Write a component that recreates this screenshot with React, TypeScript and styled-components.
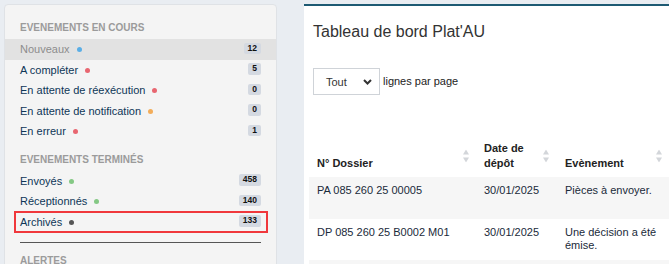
import styled, { createGlobalStyle } from "styled-components";

type Item = {
  label: string;
  count: number;
  dot: string;
  active?: boolean;
  flagged?: boolean;
};

const enCours: Item[] = [
  { label: "Nouveaux", count: 12, dot: "#5aaee6", active: true },
  { label: "A compléter", count: 5, dot: "#e86670" },
  { label: "En attente de réexécution", count: 0, dot: "#e86670" },
  { label: "En attente de notification", count: 0, dot: "#f3ad5a" },
  { label: "En erreur", count: 1, dot: "#e86670" },
];

const termines: Item[] = [
  { label: "Envoyés", count: 458, dot: "#84c884" },
  { label: "Réceptionnés", count: 140, dot: "#84c884" },
  { label: "Archivés", count: 133, dot: "#555555", flagged: true },
];

const rows = [
  { dossier: "PA 085 260 25 00005", date: "30/01/2025", event: "Pièces à envoyer." },
  { dossier: "DP 085 260 25 B0002 M01", date: "30/01/2025", event: "Une décision a été émise." },
  { dossier: "PC 085 260 24 00031", date: "29/01/2025", event: "Pièces à envoyer." },
];

const GlobalStyle = createGlobalStyle`
  html, body {
    margin: 0;
    padding: 0;
    background: #e9edf2;
    font-family: "Liberation Sans", Arial, sans-serif;
    overflow: hidden;
  }
`;

const Page = styled.div`
  display: flex;
  align-items: flex-start;
  gap: 27px;
  padding: 4px 0 0 4px;
  height: 260px;
  overflow: hidden;
`;

const Sidebar = styled.nav`
  width: 271px;
  flex-shrink: 0;
  background: #f4f4f4;
  border: 1px solid #dfe2e6;
  border-radius: 4px;
  padding: 5px 0 20px;
`;

const SectionTitle = styled.div`
  font-size: 10px;
  font-weight: bold;
  line-height: 14px;
  color: #9b9b9b;
  padding: 11px 15px 4px;
  text-transform: uppercase;
`;

const ItemRow = styled.div<{ $active?: boolean; $flagged?: boolean }>`
  position: relative;
  display: flex;
  align-items: center;
  height: 20.5px;
  padding: 0 15px;
  font-size: 11px;
  color: ${(p) => (p.$active ? "#8d8d8d" : "#0e3657")};
  background: ${(p) => (p.$active ? "#e2e2e2" : "transparent")};

  ${(p) =>
    p.$flagged &&
    `
    &::after {
      content: "";
      position: absolute;
      inset: -1px 8px -1px 9px;
      border: 2px solid #f0383c;
      pointer-events: none;
    }
  `}
`;

const Dot = styled.span<{ $color: string }>`
  width: 5px;
  height: 5px;
  border-radius: 50%;
  background: ${(p) => p.$color};
  margin-left: 7px;
  margin-top: 1px;
`;

const Badge = styled.span`
  margin-left: auto;
  margin-bottom: 2px;
  background: #d4d9e1;
  color: #111;
  font-size: 8.5px;
  font-weight: bold;
  line-height: 11.5px;
  padding: 0 4px;
  border-radius: 2px;
`;

const Divider = styled.hr`
  border: none;
  border-top: 1px solid #555;
  margin: 10px 15px 0;
`;

const Main = styled.main`
  flex: 1;
  min-width: 0;
  background: #fff;
  border-top: 2px solid #1d5a73;
  padding: 16px 0 0 9px;
  height: 300px;
  overflow: hidden;
`;

const Title = styled.h1`
  margin: 0;
  font-size: 16px;
  font-weight: normal;
  line-height: 20px;
  color: #333;
`;

const LengthBar = styled.div`
  display: flex;
  align-items: center;
  gap: 3px;
  margin-top: 26px;
  font-size: 11px;
  color: #222;
`;

const SelectBox = styled.div`
  box-sizing: border-box;
  width: 67px;
  height: 27px;
  border: 1px solid #cfd3d8;
  display: flex;
  align-items: center;
  justify-content: space-between;
  padding: 0 7px 0 12px;
  font-size: 11px;
  color: #333;
`;

const LengthLabel = styled.span`
  margin-bottom: 2px;
`;

const Table = styled.table`
  margin: 40px 0 0 -4px;
  border-collapse: collapse;
  table-layout: fixed;
  width: 364px;
  font-size: 11px;
`;

const Th = styled.th`
  position: relative;
  text-align: left;
  vertical-align: bottom;
  font-weight: bold;
  line-height: 15px;
  color: #222;
  padding: 6px 8px;
`;

const SortIcon = styled.svg<{ $right: number }>`
  position: absolute;
  right: ${(p) => p.$right}px;
  top: 50%;
  transform: translateY(-50%);
`;

const Tr = styled.tr`
  height: 41.5px;

  &:nth-child(odd) {
    background: #f6f6f6;
  }
`;

const Td = styled.td`
  vertical-align: top;
  line-height: 13.3px;
  color: #1a2a3a;
  padding: 7px 8px 0;

  &:last-child {
    padding-right: 3px;
  }
`;

function Sort({ right }: { right: number }) {
  return (
    <SortIcon $right={right} width="6" height="13" viewBox="0 0 6 13">
      <path d="M3 0 L6 5 L0 5 Z" fill="#d3d6da" />
      <path d="M3 13 L6 8 L0 8 Z" fill="#d3d6da" />
    </SortIcon>
  );
}

function Items({ list }: { list: Item[] }) {
  return (
    <>
      {list.map((item) => (
        <ItemRow key={item.label} $active={item.active} $flagged={item.flagged}>
          {item.label}
          <Dot $color={item.dot} />
          <Badge>{item.count}</Badge>
        </ItemRow>
      ))}
    </>
  );
}

export default function App() {
  return (
    <>
      <GlobalStyle />
      <Page>
        <Sidebar>
          <SectionTitle>Evenements en cours</SectionTitle>
          <Items list={enCours} />
          <SectionTitle>Evenements terminés</SectionTitle>
          <Items list={termines} />
          <Divider />
          <SectionTitle>Alertes</SectionTitle>
        </Sidebar>

        <Main>
          <Title>Tableau de bord Plat'AU</Title>
          <LengthBar>
            <SelectBox>
              Tout
              <svg width="9" height="6" viewBox="0 0 9 6">
                <path d="M1 1 L4.5 4.5 L8 1" stroke="#333" strokeWidth="2" fill="none" />
              </svg>
            </SelectBox>
            <LengthLabel>lignes par page</LengthLabel>
          </LengthBar>

          <Table>
            <colgroup>
              <col style={{ width: 167 }} />
              <col style={{ width: 81 }} />
              <col style={{ width: 116 }} />
            </colgroup>
            <thead>
              <tr>
                <Th>
                  N° Dossier
                  <Sort right={7} />
                </Th>
                <Th>
                  Date de
                  <br />
                  dépôt
                  <Sort right={8} />
                </Th>
                <Th>
                  Evènement
                  <Sort right={11} />
                </Th>
              </tr>
            </thead>
            <tbody>
              {rows.map((r) => (
                <Tr key={r.dossier}>
                  <Td>{r.dossier}</Td>
                  <Td>{r.date}</Td>
                  <Td>{r.event}</Td>
                </Tr>
              ))}
            </tbody>
          </Table>
        </Main>
      </Page>
    </>
  );
}
